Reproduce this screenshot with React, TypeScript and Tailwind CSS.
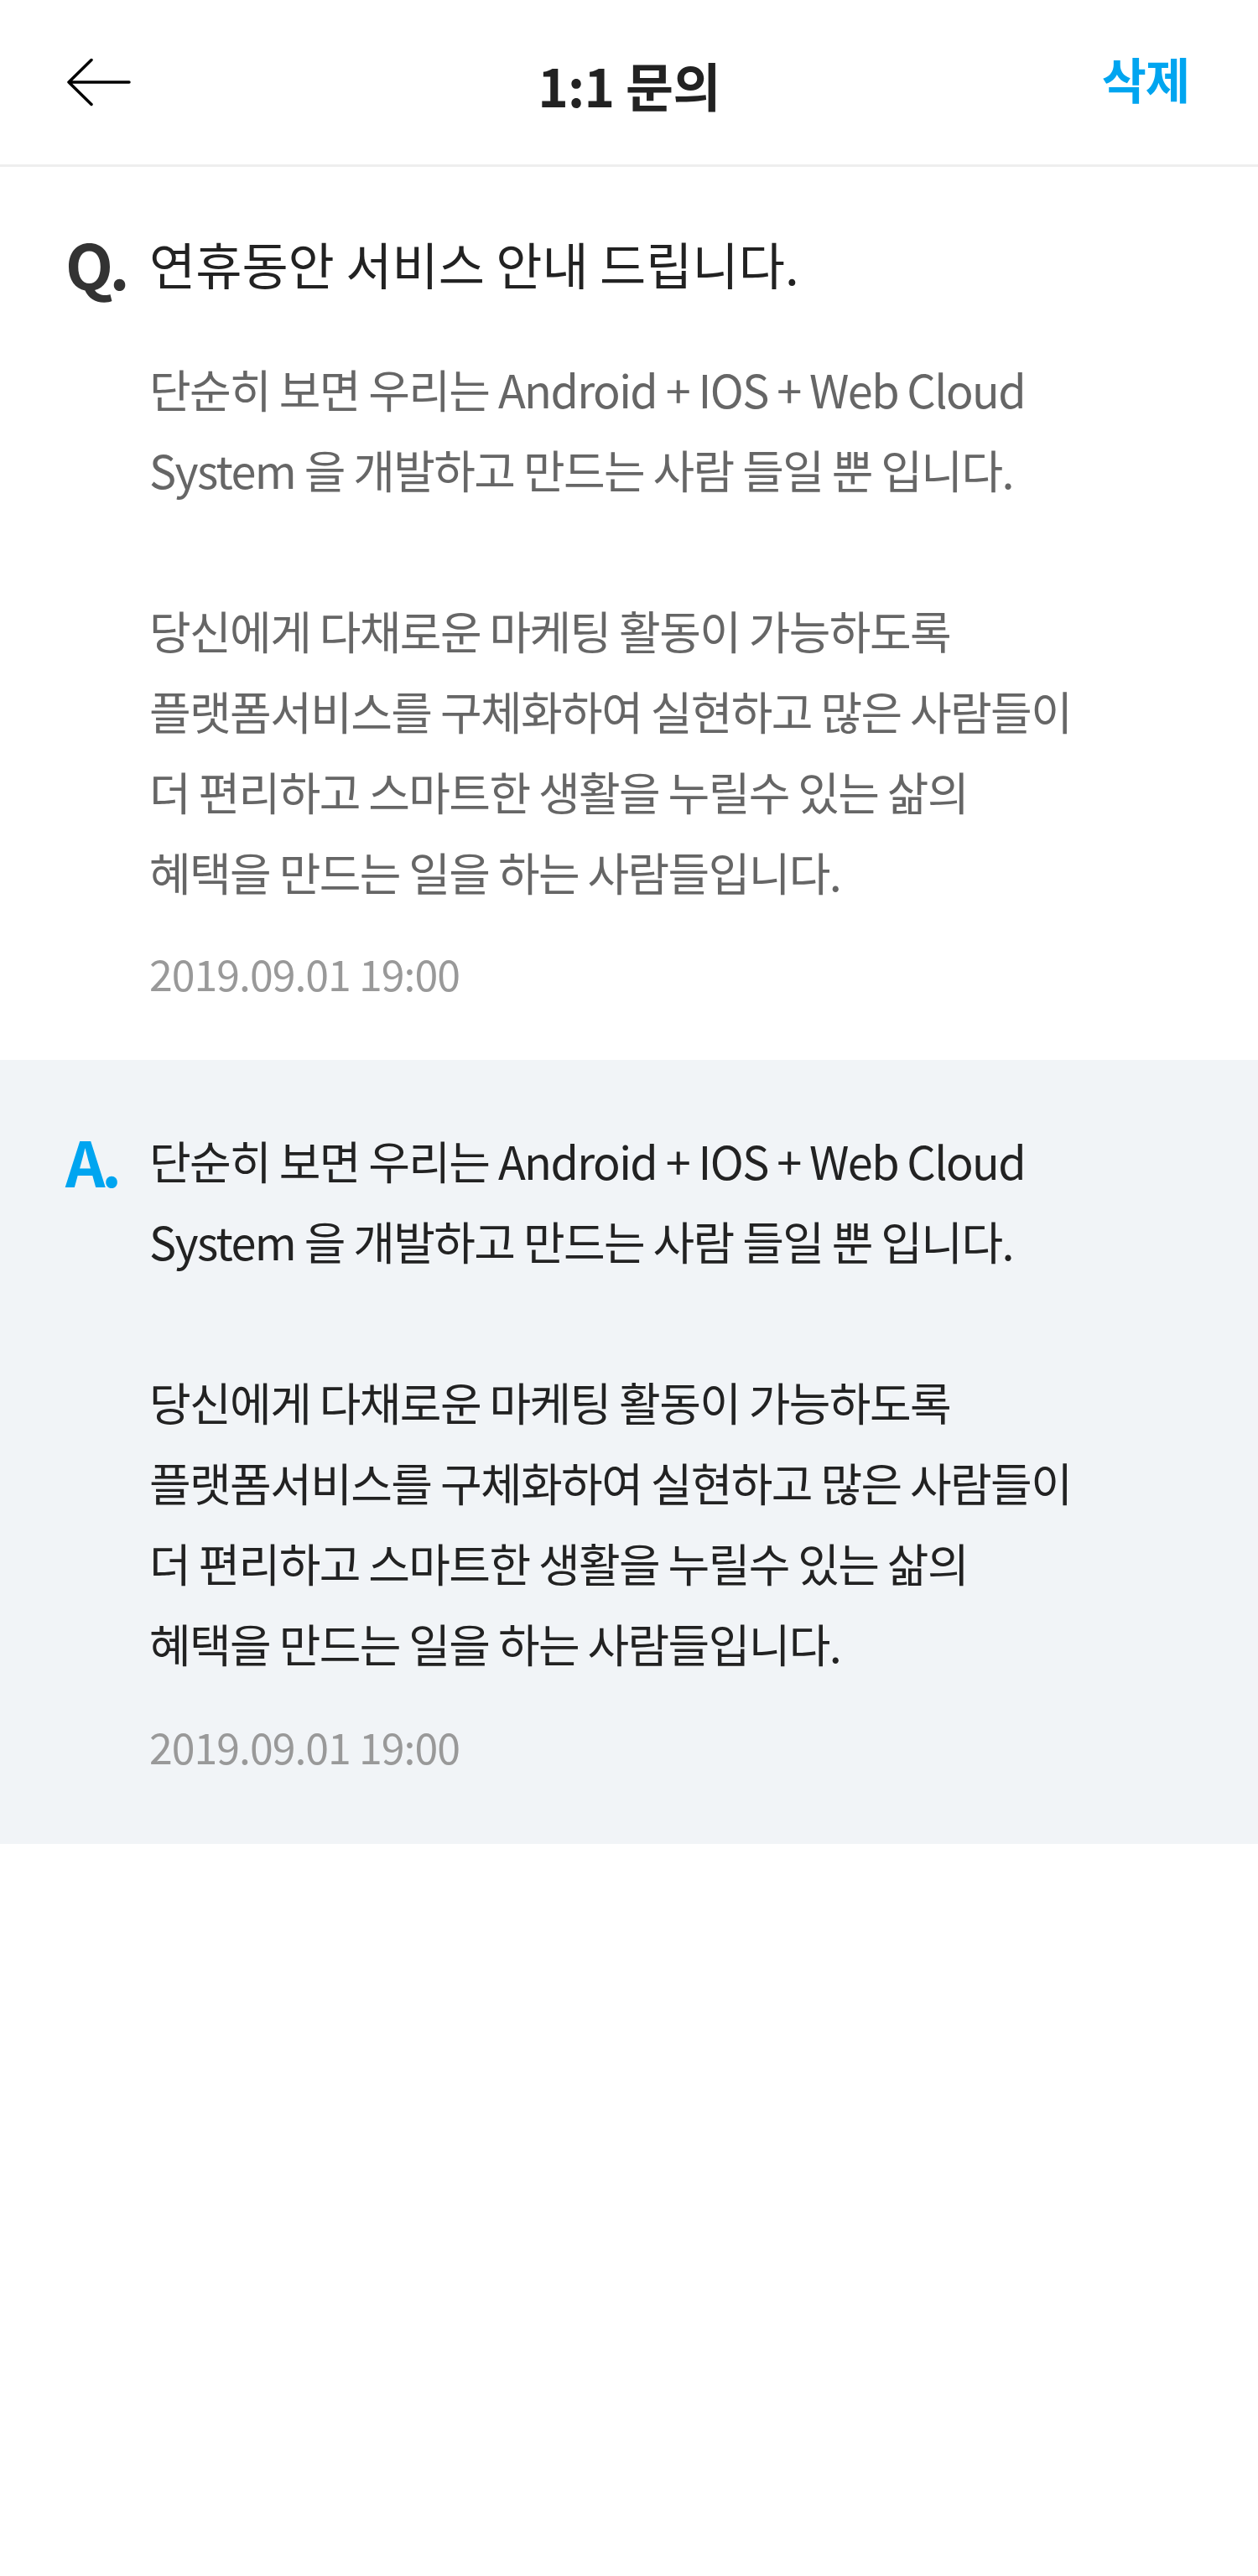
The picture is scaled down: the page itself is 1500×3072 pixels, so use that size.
const lines = [
  "단순히 보면 우리는 Android + IOS + Web Cloud",
  "System 을 개발하고 만드는 사람 들일 뿐 입니다.",
  "",
  "당신에게 다채로운 마케팅 활동이 가능하도록",
  "플랫폼서비스를 구체화하여 실현하고 많은 사람들이",
  "더 편리하고 스마트한 생활을 누릴수 있는 삶의",
  "혜택을 만드는 일을 하는 사람들입니다.",
];

const font = "font-['Noto_Sans_CJK_KR','Noto_Sans',sans-serif]";

function BodyLines({ color }: { color: string }) {
  return (
    <div className={`text-[54px] tracking-[-0.03em] ${color}`}>
      {lines.map((line, i) => (
        <div key={i} className="h-[96px] leading-[96px] whitespace-nowrap">
          {line}
        </div>
      ))}
    </div>
  );
}

export default function App() {
  return (
    <div className={`min-h-[3072px] w-[1500px] bg-white ${font}`}>
      <header className="grid h-[199px] grid-cols-[1fr_auto_1fr] items-center border-b-[3px] border-[#eeeeee] px-[80px]">
        <button className="flex h-[60px] w-[80px] items-center">
          <svg width="78" height="60" viewBox="0 0 78 60" fill="none">
            <path
              d="M2 27H74M2 27L29 0.5M2 27L29 53.5"
              stroke="#000"
              strokeWidth="3.5"
              strokeLinecap="round"
              strokeLinejoin="round"
              transform="translate(0 3)"
            />
          </svg>
        </button>
        <h1 className="pt-[6px] text-[62px] font-bold tracking-[-0.01em] text-[#222222]">1:1 문의</h1>
        <div className="flex justify-end">
          <button className="-mt-[10px] pr-[2px] text-[58px] font-bold tracking-[-0.02em] text-[#00a5f0]">삭제</button>
        </div>
      </header>

      <section className="pb-[74px] pt-[75px]">
        <div className="flex items-center px-[78px]">
          <span className="w-[100px] text-[74px] font-bold leading-[80px] tracking-[-0.06em] text-[#333333]">Q.</span>
          <h2 className="text-[60px] leading-[80px] tracking-normal text-[#222222]">연휴동안 서비스 안내 드립니다.</h2>
        </div>
        <div className="mt-[62px] pl-[178px]">
          <BodyLines color="text-[#666666]" />
          <div className="mt-[42px] h-[60px] text-[50px] leading-[60px] tracking-[-0.02em] text-[#999999]">2019.09.01 19:00</div>
        </div>
      </section>

      <section className="bg-[#f1f4f7] pb-[87px] pt-[72px]">
        <div className="flex items-start px-[78px]">
          <span className="w-[100px] text-[74px] font-bold leading-[96px] tracking-[-0.06em] text-[#00a5f0]">A.</span>
          <div>
            <BodyLines color="text-[#222222]" />
            <div className="mt-[44px] h-[60px] text-[50px] leading-[60px] tracking-[-0.02em] text-[#999999]">2019.09.01 19:00</div>
          </div>
        </div>
      </section>
    </div>
  );
}
